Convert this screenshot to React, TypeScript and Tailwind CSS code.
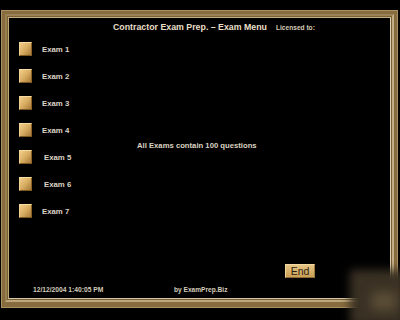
import React from "react";

const exams = [
  { n: 1, shift: "ml-0" },
  { n: 2, shift: "ml-0" },
  { n: 3, shift: "ml-0" },
  { n: 4, shift: "ml-0" },
  { n: 5, shift: "ml-[2px]" },
  { n: 6, shift: "ml-[2px]" },
  { n: 7, shift: "ml-0" },
];

function GoldBox() {
  return (
    <div className="w-[13px] h-[14px] shrink-0 border border-t-[#f6dca0] border-l-[#f0d090] border-r-[#8a6228] border-b-[#7a5620] bg-gradient-to-br from-[#f2cf8a] via-[#d8ad62] to-[#a87a38]" />
  );
}

export default function App() {
  return (
    <div className="relative w-[400px] h-[320px] overflow-hidden bg-black font-['Liberation_Sans',Arial,sans-serif]">
      <div className="pt-[10px] pl-[1px]">
        <div className="w-[397px] h-[298px] border border-[#a8915f] bg-[#866c3e] p-[3px] pb-[5px]">
          <div className="h-full border-[2px] border-t-[#9c8356] border-l-[#98804f] border-r-[#c2ad84] border-b-[#bea77a] p-[1px] bg-[#76603a]">
            <div className="h-full border border-t-[#c8b084] border-l-[#c2a878] border-r-[#e0d0ac] border-b-[#d8c6a0] bg-black">
              <div className="flex flex-col h-[280px] -m-px">
                <div className="pt-[4px] pl-[105px] flex items-baseline gap-[9px] h-[16px]">
                  <span className="text-[8.8px] leading-[12px] font-bold text-[#e9dfc8]">
                    Contractor Exam Prep. – Exam Menu
                  </span>
                  <span className="text-[6.6px] leading-[12px] font-bold text-[#d6ccb8]">
                    Licensed to:
                  </span>
                </div>
                <div className="flex flex-1">
                  <div className="w-[129px] pl-[11px] pt-[9px] flex flex-col gap-[13px]">
                    {exams.map((e) => (
                      <div key={e.n} className="flex items-center h-[14px]">
                        <GoldBox />
                        <span
                          className={
                            "pl-[10px] pt-[2px] text-[7.8px] leading-[10px] font-bold text-[#dcd4c6] " +
                            e.shift
                          }
                        >
                          Exam {e.n}
                        </span>
                      </div>
                    ))}
                  </div>
                  <div className="pt-[108px] text-[7.7px] leading-[10px] font-bold text-[#ddd3c1]">
                    All Exams contain 100 questions
                  </div>
                </div>
                <div className="flex pl-[277px]">
                  <div className="w-[30px] h-[14px] flex items-center justify-center border border-t-[#f2d9a2] border-l-[#efd49a] border-r-[#9c7a40] border-b-[#8e6c34] bg-gradient-to-b from-[#e6c484] to-[#c99e58] text-[10.5px] leading-[12px] text-[#2e1f0c]">
                    End
                  </div>
                </div>
                <div className="flex mt-[7px] pb-[2px] h-[12px] items-start">
                  <div className="w-[166px] pl-[25px] text-[6.7px] leading-[10px] font-bold text-[#d4ccbc]">
                    12/12/2004 1:40:05 PM
                  </div>
                  <div className="text-[6.6px] leading-[10px] font-bold text-[#d4ccbc]">
                    by ExamPrep.Biz
                  </div>
                </div>
              </div>
            </div>
          </div>
        </div>
      </div>
      <div className="absolute left-[350px] top-[270px] w-[56px] h-[56px] bg-[#3a3124] blur-[5px]" />
      <div className="absolute left-[372px] top-[292px] w-[24px] h-[18px] bg-[#5e5038] blur-[6px]" />
    </div>
  );
}
